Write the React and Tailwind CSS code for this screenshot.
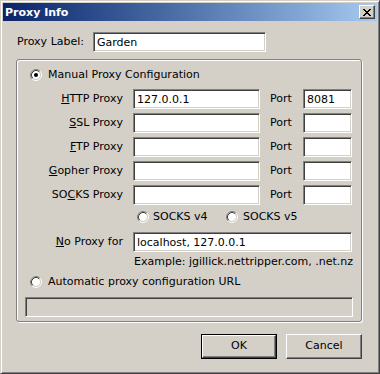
import React from "react";

const sunken =
  "border border-t-[#808080] border-l-[#808080] border-r-white border-b-white shadow-[inset_1px_1px_0_#404040,inset_-1px_-1px_0_#d4d0c8] flex items-center px-[3px] leading-none";

function Field({ value = "", className = "", disabled = false }) {
  return (
    <div className={`${sunken} ${disabled ? "bg-[#d4d0c8]" : "bg-white"} ${className}`}>
      <span className="whitespace-nowrap">{value}</span>
    </div>
  );
}

function Radio({ checked }) {
  return (
    <svg width="12" height="12" viewBox="0 0 12 12" className="shrink-0">
      <circle cx="6" cy="6" r="4" fill="#fff" />
      <path d="M2.11 9.89 A5.5 5.5 0 0 1 9.89 2.11" fill="none" stroke="#808080" />
      <path d="M9.89 2.11 A5.5 5.5 0 0 1 2.11 9.89" fill="none" stroke="#fff" />
      <path d="M2.82 9.18 A4.5 4.5 0 0 1 9.18 2.82" fill="none" stroke="#404040" />
      <path d="M9.18 2.82 A4.5 4.5 0 0 1 2.82 9.18" fill="none" stroke="#d4d0c8" />
      {checked && <circle cx="6" cy="6" r="2" fill="#000" />}
    </svg>
  );
}

function ProxyRow({ label, value = "", port = "" }) {
  return (
    <div className="flex items-center h-[20px]">
      <div className="w-[106px] text-right whitespace-nowrap">{label}</div>
      <Field value={value} className="ml-[10px] w-[127px] h-[20px]" />
      <div className="ml-[10px] w-[33px]">Port</div>
      <Field value={port} className="w-[49px] h-[20px]" />
    </div>
  );
}

function Button({ children, isDefault }) {
  const inner = (
    <div className="w-full h-full flex items-center justify-center border border-t-white border-l-white border-r-[#404040] border-b-[#404040] shadow-[inset_-1px_-1px_0_#808080]">
      {children}
    </div>
  );
  return isDefault ? (
    <div className="w-[76px] h-[25px] border border-black">{inner}</div>
  ) : (
    <div className="w-[76px] h-[25px]">{inner}</div>
  );
}

function CloseX() {
  const px = [
    [0, 0], [1, 0], [6, 0], [7, 0],
    [1, 1], [2, 1], [5, 1], [6, 1],
    [2, 2], [3, 2], [4, 2], [5, 2],
    [3, 3], [4, 3],
    [2, 4], [3, 4], [4, 4], [5, 4],
    [1, 5], [2, 5], [5, 5], [6, 5],
    [0, 6], [1, 6], [6, 6], [7, 6],
  ];
  return (
    <svg width="8" height="7" viewBox="0 0 8 7" shapeRendering="crispEdges">
      {px.map(([x, y], i) => (
        <rect key={i} x={x} y={y} width="1" height="1" fill="#000" />
      ))}
    </svg>
  );
}

export default function App() {
  return (
    <div className="w-[380px] h-[374px] bg-[#d4d0c8] border border-t-[#d4d0c8] border-l-[#d4d0c8] border-r-[#404040] border-b-[#404040] shadow-[inset_1px_1px_0_#fff,inset_-1px_-1px_0_#808080] p-[2px] font-['DejaVu_Sans',sans-serif] text-[11px] text-black flex flex-col">
      {/* title bar */}
      <div className="h-[18px] shrink-0 bg-linear-to-r from-[#0a246a] to-[#a6caf0] flex items-center pl-[2px] pr-[2px]">
        <span className="text-white font-bold leading-none">Proxy Info</span>
        <div className="ml-auto w-[16px] h-[14px] bg-[#d4d0c8] border border-t-white border-l-white border-r-[#404040] border-b-[#404040] shadow-[inset_-1px_-1px_0_#808080] flex items-center justify-center">
          <CloseX />
        </div>
      </div>

      <div className="flex flex-col pl-[13px] pr-[15px]">
        {/* proxy label */}
        <div className="mt-[11px] flex items-center h-[20px]">
          <div className="ml-[1px] w-[76px]">Proxy Label:</div>
          <Field value="Garden" className="w-[173px] h-[20px]" />
        </div>

        {/* group box */}
        <div className="mt-[7px] h-[263px] rounded-[3px] border border-[#808080] shadow-[inset_1px_1px_0_#fff,1px_1px_0_#fff] pt-[7px] flex flex-col">
          <div className="flex items-center h-[16px] ml-[13px]">
            <Radio checked />
            <span className="ml-[6px]">Manual Proxy Configuration</span>
          </div>

          <div className="mt-[6px] flex flex-col gap-[4px]">
            <ProxyRow label={<><span className="underline">H</span>TTP Proxy</>} value="127.0.0.1" port="8081" />
            <ProxyRow label={<><span className="underline">S</span>SL Proxy</>} />
            <ProxyRow label={<><span className="underline">F</span>TP Proxy</>} />
            <ProxyRow label={<><span className="underline">G</span>opher Proxy</>} />
            <ProxyRow label={<>SO<span className="underline">C</span>KS Proxy</>} />
          </div>

          <div className="mt-[4px] h-[16px] flex items-center ml-[120px]">
            <div className="w-[89px] flex items-center">
              <Radio />
              <span className="ml-[4px]">SOCKS v4</span>
            </div>
            <div className="flex items-center">
              <Radio />
              <span className="ml-[5px]">SOCKS v5</span>
            </div>
          </div>

          <div className="mt-[7px] flex items-center h-[20px]">
            <div className="w-[106px] text-right whitespace-nowrap">
              <span className="underline">N</span>o Proxy for
            </div>
            <Field value="localhost, 127.0.0.1" className="ml-[10px] w-[219px] h-[20px]" />
          </div>

          <div className="mt-[3px] h-[14px] ml-[117px] flex items-center whitespace-nowrap">
            Example: jgillick.nettripper.com, .net.nz
          </div>

          <div className="mt-[5px] flex items-center h-[16px] ml-[13px]">
            <Radio />
            <span className="ml-[6px]">Automatic proxy configuration URL</span>
          </div>

          <Field disabled className="mt-[7px] ml-[8px] w-[328px] h-[20px]" />
        </div>

        {/* buttons */}
        <div className="mt-[12px] flex justify-end gap-[9px]">
          <Button isDefault>OK</Button>
          <Button>Cancel</Button>
        </div>
      </div>
    </div>
  );
}
